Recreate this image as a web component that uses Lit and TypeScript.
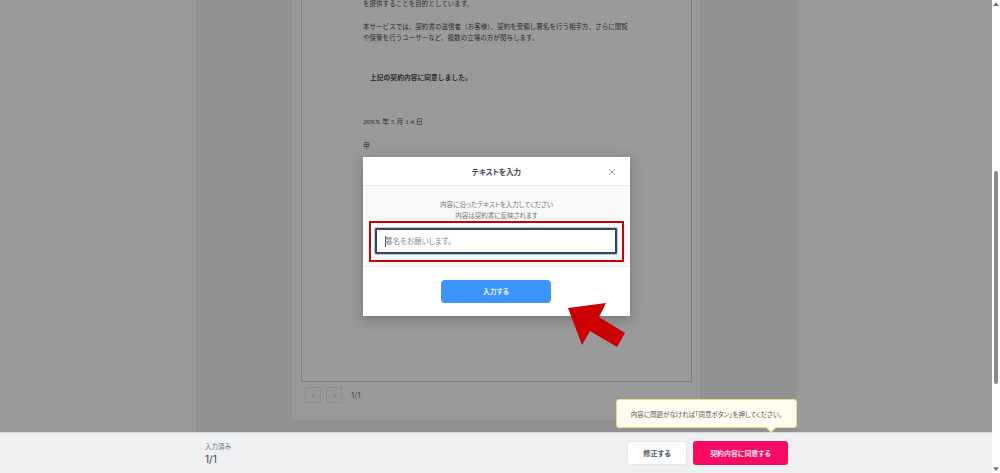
import { LitElement, html, css } from "lit";
import { customElement } from "lit/decorators.js";

@customElement("app-root")
export class AppRoot extends LitElement {
  static styles = css`
    :host {
      display: block;
      width: 1000px;
      height: 473px;
      position: relative;
      overflow: hidden;
      font-family: "Noto Sans CJK JP", "Noto Sans", sans-serif;
      font-feature-settings: "palt";
      background: #fff;
    }
    .view {
      width: 1000px;
      height: 473px;
      display: grid;
      grid-template-columns: 992px 8px;
    }
    .main {
      display: flex;
      flex-direction: column;
      min-width: 0;
    }
    .stage {
      height: 432px;
      overflow: hidden;
    }
    .backdrop {
      height: 100%;
      background: #9a9a9a;
      display: flex;
      padding-left: 196px;
      box-sizing: border-box;
    }
    .panel {
      width: 601px;
      height: 100%;
      background: #929292;
      padding-left: 96px;
      box-sizing: border-box;
    }
    .sheet {
      width: 408px;
      height: 420px;
      background: #9a9a9a;
      padding: 0 8px 0 9px;
      box-sizing: border-box;
      display: flex;
      flex-direction: column;
    }
    .page {
      height: 382px;
      box-sizing: border-box;
      border: 1px solid #7d7d7d;
      border-top: 0;
      padding: 0 0 0 61px;
      font-feature-settings: normal;
      color: #2b2b2b;
      font-size: 6.5px;
      line-height: 11px;
    }
    .page p {
      margin: 0;
      white-space: nowrap;
      letter-spacing: 0.04px;
    }
    .page .l1 { line-height: 6px; }
    .page .l2 { margin-top: 14.5px; }
    .page .l4 {
      margin-top: 29px;
      padding-left: 7px;
      font-weight: 700;
      font-size: 6.7px;
      letter-spacing: 0.1px;
    }
    .page .l5 {
      margin-top: 34px;
      font-family: "Liberation Serif", "Noto Sans CJK JP", serif;
      font-size: 7.1px;
      letter-spacing: 0;
      height: 11px;
    }
    .page .l6 { margin-top: 12px; font-size: 7px; }
    .pager {
      display: flex;
      align-items: center;
      gap: 5px;
      padding: 5px 0 0 4px;
      color: #4f4f4f;
      font-family: "Inter", sans-serif;
      font-size: 8px;
    }
    .pg {
      width: 16px;
      height: 16px;
      box-sizing: border-box;
      border: 1px solid #8d8d8d;
      border-radius: 2px;
      display: flex;
      align-items: center;
      justify-content: center;
    }
    .count { margin-left: 4px; }
    .footer {
      height: 41px;
      background: #eff0f2;
      border-top: 1px solid #d8d8d8;
      box-sizing: border-box;
      display: flex;
      align-items: center;
      justify-content: space-between;
      padding: 0 204px 0 205px;
    }
    .status {
      display: flex;
      flex-direction: column;
      gap: 3px;
    }
    .status small {
      font-size: 6.5px;
      line-height: 8px;
      color: #6b7280;
    }
    .status b {
      font-size: 10px;
      line-height: 12px;
      font-weight: 400;
      color: #3a4150;
      font-family: "Inter", sans-serif;
    }
    .actions {
      display: flex;
      gap: 6px;
    }
    .btn {
      height: 24px;
      border-radius: 3px;
      font-weight: 700;
      display: flex;
      align-items: center;
      justify-content: center;
      box-sizing: border-box;
    }
    .fix {
      width: 60px;
      font-size: 7.2px;
      background: #fff;
      border: 1px solid #e5e7eb;
      color: #4b5563;
    }
    .agree {
      width: 95px;
      font-size: 6.9px;
      background: #f70b63;
      color: #ffe3ee;
    }
    .tip {
      position: absolute;
      left: 616px;
      top: 399px;
      width: 181px;
      height: 29px;
      box-sizing: border-box;
      background: #fffdee;
      border: 1px solid #eadb8a;
      border-radius: 3px;
      font-size: 6.5px;
      color: #55565c;
      display: flex;
      align-items: center;
      justify-content: center;
      white-space: nowrap;
      z-index: 3;
    }
    .tip::after {
      content: "";
      position: absolute;
      left: 150px;
      bottom: -4px;
      width: 8px;
      height: 8px;
      box-sizing: border-box;
      background: #fffdee;
      border-right: 1px solid #eadb8a;
      border-bottom: 1px solid #eadb8a;
      transform: rotate(45deg);
    }
    .scroll {
      background: #fdfdfd;
      display: flex;
      flex-direction: column;
      align-items: center;
      justify-content: space-between;
      padding: 2px 0;
      box-sizing: border-box;
      position: relative;
    }
    .thumb {
      position: absolute;
      left: 2px;
      top: 171px;
      width: 4px;
      height: 213px;
      border-radius: 2px;
      background: #8a8a8a;
    }
    .modal {
      position: absolute;
      left: 363px;
      top: 157px;
      width: 267px;
      height: 159px;
      background: #fff;
      box-shadow: 0 3px 12px rgba(0, 0, 0, 0.25);
      display: flex;
      flex-direction: column;
      z-index: 2;
    }
    .head {
      height: 29px;
      flex: none;
      box-sizing: border-box;
      border-bottom: 1px solid #e8e8e8;
      display: flex;
      align-items: center;
      justify-content: center;
      font-size: 7.5px;
      font-weight: 700;
      color: #3f4654;
      position: relative;
    }
    .close {
      position: absolute;
      right: 14px;
      top: 11px;
      width: 8px;
      height: 8px;
    }
    .body {
      height: 81px;
      flex: none;
      box-sizing: border-box;
      background: #f9f9f9;
      border-bottom: 1px solid #eee;
      padding: 13px 6px 0;
      text-align: center;
      font-size: 6.5px;
      line-height: 10.5px;
      color: #6f7278;
    }
    .field {
      margin-top: 1px;
      height: 41px;
      box-sizing: border-box;
      border: 2px solid #cc0000;
      padding: 5px 5px 6px 4px;
      background: #fff;
    }
    .input {
      height: 26px;
      box-sizing: border-box;
      border: 2px solid #3b4450;
      outline: 1px solid #a9cdf8;
      border-radius: 1px;
      background: #fff;
      display: flex;
      align-items: center;
      padding-left: 8px;
      font-size: 7.5px;
      color: #8d9097;
      text-align: left;
    }
    .caret {
      width: 1px;
      height: 11px;
      background: #555;
      margin-right: -1px;
      flex: none;
    }
    .foot {
      flex: 1;
      display: flex;
      justify-content: center;
      padding: 13px 1px 0 0;
    }
    .submit {
      width: 110px;
      height: 23px;
      box-sizing: border-box;
      padding-bottom: 1px;
      border-radius: 4px;
      background: #3c94ff;
      color: #e8f2ff;
      font-size: 6.8px;
      font-weight: 700;
      display: flex;
      align-items: center;
      justify-content: center;
    }
    .arrow {
      position: absolute;
      left: 565px;
      top: 300px;
      width: 64px;
      height: 50px;
      z-index: 3;
    }
  `;

  render() {
    return html`
      <div class="view">
        <div class="main">
          <div class="stage">
            <div class="backdrop">
              <div class="panel">
                <div class="sheet">
                  <div class="page">
                    <p class="l1">を提供することを目的としています。</p>
                    <p class="l2">本サービスでは、契約書の送信者（お客様）、契約を受領し署名を行う相手方、さらに閲覧</p>
                    <p>や保管を行うユーザーなど、複数の立場の方が関与します。</p>
                    <p class="l4">上記の契約内容に同意しました。</p>
                    <p class="l5">20XX 年 5 月 1 4 日</p>
                    <p class="l6">甲</p>
                  </div>
                  <div class="pager">
                    <span class="pg"><svg width="7" height="7" viewBox="0 0 7 7" fill="none" stroke="#6d6d6d"><path d="M4.5 1 2 3.5 4.5 6"/></svg></span>
                    <span class="pg"><svg width="7" height="7" viewBox="0 0 7 7" fill="none" stroke="#6d6d6d"><path d="M2.5 1 5 3.5 2.5 6"/></svg></span>
                    <span class="count">1/1</span>
                  </div>
                </div>
              </div>
            </div>
          </div>
          <div class="footer">
            <div class="status"><small>入力済み</small><b>1/1</b></div>
            <div class="actions">
              <div class="btn fix">修正する</div>
              <div class="btn agree">契約内容に同意する</div>
            </div>
          </div>
        </div>
        <div class="scroll">
          <svg width="6" height="4" viewBox="0 0 8 5"><path d="M4 0 8 5H0z" fill="#777"/></svg>
          <div class="thumb"></div>
          <svg width="6" height="4" viewBox="0 0 8 5"><path d="M0 0H8L4 5z" fill="#777"/></svg>
        </div>
      </div>

      <div class="modal">
        <div class="head">
          テキストを入力
          <svg class="close" viewBox="0 0 8 8" fill="none" stroke="#8b8f96" stroke-width="0.9"><path d="M1 1 7 7M7 1 1 7"/></svg>
        </div>
        <div class="body">
          内容に沿ったテキストを入力してください<br />内容は契約書に反映されます
          <div class="field">
            <div class="input"><span class="caret"></span>署名をお願いします。</div>
          </div>
        </div>
        <div class="foot"><div class="submit">入力する</div></div>
      </div>

      <svg class="arrow" viewBox="0 0 64 50"><path d="M3 8 41 3 34 17 60 33 52 47 25 31 17 45z" fill="#cc0000"/></svg>

      <div class="tip">内容に問題がなければ「同意ボタン」を押してください。</div>
    `;
  }
}
